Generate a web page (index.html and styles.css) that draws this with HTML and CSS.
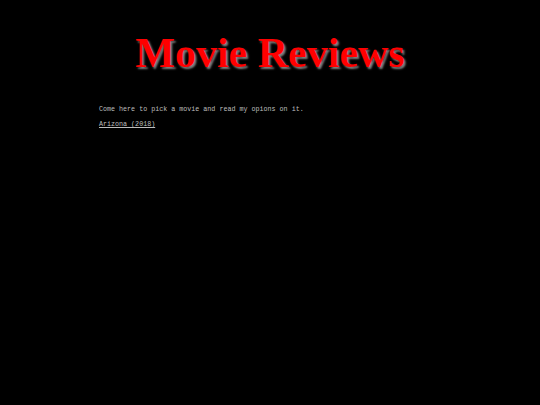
FILE: index.html
```html
<!DOCTYPE html>
<html>
<head>
<meta charset="utf-8">
<link rel="stylesheet" href="styles.css">
</head>
<body>
<h1 class="title">Movie Reviews</h1>
<div class="content">
<p class="intro">Come here to pick a movie and read my opions on it.</p>
<a class="movie" href="#">Arizona (2018)</a>
</div>
</body>
</html>
```
FILE: styles.css
```css
html, body {
  margin: 0;
  padding: 0;
  background: #000;
}
.title {
  margin: 0;
  padding-top: 31px;
  text-align: center;
  font-family: "Liberation Serif", serif;
  font-weight: bold;
  font-size: 42px;
  line-height: 44px;
  color: #ff0000;
  text-shadow: 2px 2px 2px #808080;
}
.content {
  padding: 30px 0 0 99px;
  font-family: "Liberation Mono", "Courier New", monospace;
  font-size: 6.7px;
  color: #bdbdbd;
}
.intro {
  margin: 0 0 7px 0;
  line-height: 8px;
}
.movie {
  color: #bdbdbd;
  line-height: 8px;
  text-decoration: underline;
}
```
